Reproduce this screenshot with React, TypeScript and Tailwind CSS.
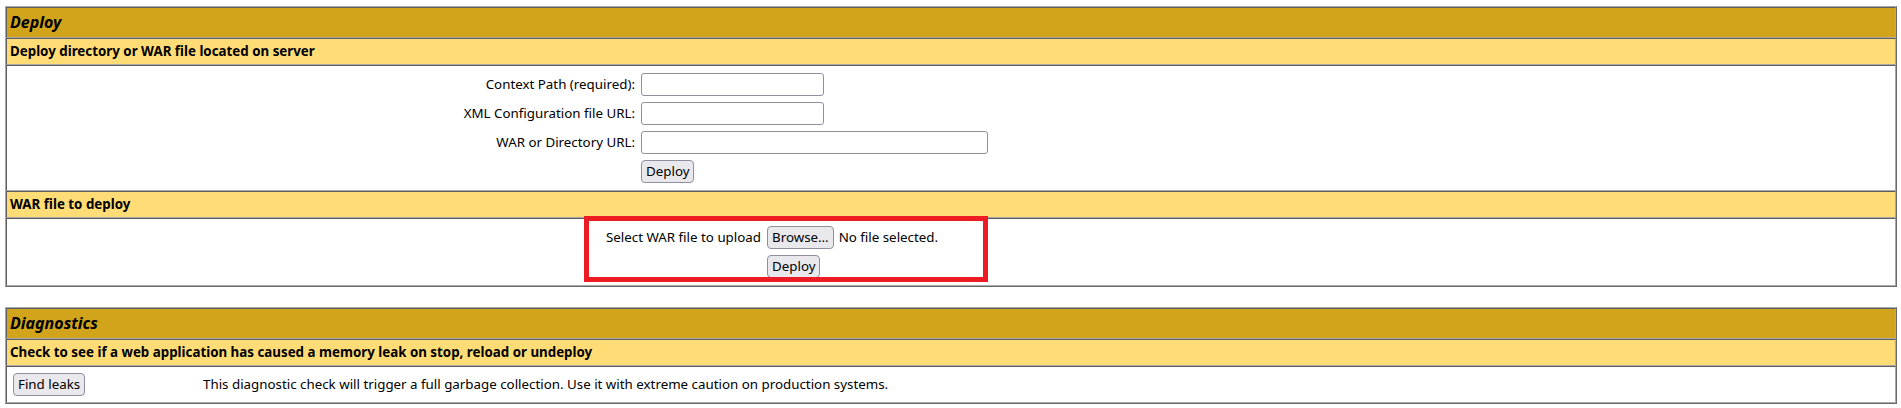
const outer = "border border-t-[#a8a8a8] border-l-[#a8a8a8] border-r-[#6a6a6a] border-b-[#6a6a6a] bg-white";
const cell = "border border-t-[#5e5e5e] border-l-[#5e5e5e] border-b-[#a8a8a8] border-r-[#a8a8a8] p-[3px]";
const btn = "h-[23px] rounded-[4px] border border-[#8f8f9d] bg-[#e9e9ed] px-[4px] text-[13.333px] leading-none text-black";
const input = "h-[23px] rounded-[3px] border border-[#8f8f9d] bg-white";

function Title({ text }: { text: string }) {
  return <div className={`${cell} bg-[#d2a41c] text-[16px] font-bold italic leading-[23px] text-black`}>{text}</div>;
}

function SubHeader({ text }: { text: string }) {
  return <div className={`${cell} bg-[#ffdc75] text-[13.333px] font-bold leading-[19px] text-black`}>{text}</div>;
}

export default function App() {
  return (
    <div className="relative min-h-[408px] bg-white pt-[6px] pl-[5px] font-['Noto_Sans',sans-serif] text-[13.333px] text-black">
      {/* Deploy */}
      <div className={`${outer} w-[1892px]`}>
        <Title text="Deploy" />
        <SubHeader text="Deploy directory or WAR file located on server" />
        <div className={`${cell} pt-[4px] pb-[4px]`}>
          <div className="grid grid-cols-[628px_auto]">
            <div className="flex h-[29px] items-center justify-end pr-[3px]">Context Path (required):</div>
            <div className="flex h-[29px] items-center pl-[3px]"><div className={`${input} w-[183px]`} /></div>
            <div className="flex h-[29px] items-center justify-end pr-[3px]">XML Configuration file URL:</div>
            <div className="flex h-[29px] items-center pl-[3px]"><div className={`${input} w-[183px]`} /></div>
            <div className="flex h-[29px] items-center justify-end pr-[3px]">WAR or Directory URL:</div>
            <div className="flex h-[29px] items-center pl-[3px]"><div className={`${input} w-[347px]`} /></div>
            <div className="h-[29px]" />
            <div className="flex h-[29px] items-center pl-[3px]"><button className={`${btn} h-[22px]`}>Deploy</button></div>
          </div>
        </div>
        <SubHeader text="WAR file to deploy" />
        <div className={`${cell} pt-[4px] pb-[4px]`}>
          <div className="grid grid-cols-[754px_auto]">
            <div className="flex h-[29px] items-center justify-end pr-[3px]">Select WAR file to upload</div>
            <div className="flex h-[29px] items-center gap-[5px] pl-[3px]">
              <button className={btn}>Browse…</button>
              <span>No file selected.</span>
            </div>
            <div className="h-[29px]" />
            <div className="flex h-[29px] items-center pl-[3px]"><button className={`${btn} h-[22px]`}>Deploy</button></div>
          </div>
        </div>
      </div>

      {/* red annotation box */}
      <div className="absolute left-[584px] top-[216px] h-[66px] w-[404px] border-[5px] border-[#ed1c24]" />

      {/* Diagnostics */}
      <div className={`${outer} mt-[20px] w-[1892px]`}>
        <Title text="Diagnostics" />
        <SubHeader text="Check to see if a web application has caused a memory leak on stop, reload or undeploy" />
        <div className={`${cell}`}>
          <div className="grid grid-cols-[190px_auto]">
            <div className="flex h-[29px] items-center pl-[3px]"><button className={btn}>Find leaks</button></div>
            <div className="flex h-[29px] items-center pl-[3px]">
              This diagnostic check will trigger a full garbage collection. Use it with extreme caution on production systems.
            </div>
          </div>
        </div>
      </div>
    </div>
  );
}
